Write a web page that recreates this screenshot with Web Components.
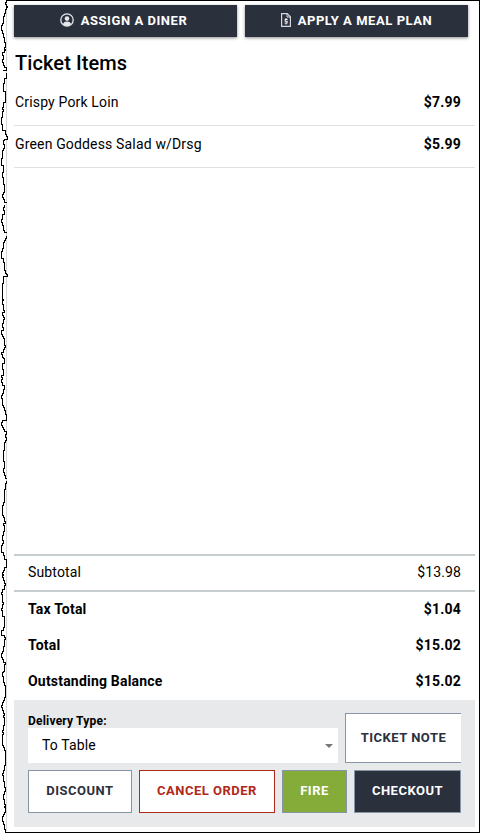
<!DOCTYPE html>
<html>
<head>
<meta charset="utf-8">
<style>
  html, body { margin: 0; padding: 0; background: #fff; }
  body { font-family: Roboto, "Liberation Sans", sans-serif; color: #000; }
</style>
</head>
<body>
<ticket-screen>
  <div slot="top" style="display:contents">
    <action-button icon="user">ASSIGN A DINER</action-button>
    <action-button icon="plan">APPLY A MEAL PLAN</action-button>
  </div>
  <ticket-item name="Crispy Pork Loin" price="$7.99"></ticket-item>
  <ticket-item name="Green Goddess Salad w/Drsg" price="$5.99"></ticket-item>
  <total-row slot="totals" label="Subtotal" value="$13.98"></total-row>
  <total-row slot="totals" label="Tax Total" value="$1.04" strong></total-row>
  <total-row slot="totals" label="Total" value="$15.02" strong></total-row>
  <total-row slot="totals" label="Outstanding Balance" value="$15.02" strong></total-row>
  <order-panel slot="panel"></order-panel>
</ticket-screen>

<script>
  const ICONS = {
    user: `<svg width="14" height="14" viewBox="0 0 14 14"><circle cx="7" cy="7" r="6.2" fill="none" stroke="#e6e7ea" stroke-width="1.3"/><circle cx="7" cy="5.6" r="2.3" fill="#e6e7ea"/><path d="M2.9 11c.7-1.9 2.2-2.6 4.1-2.6s3.4.7 4.1 2.6C10 12.4 8.6 13 7 13s-3-.6-4.1-2z" fill="#e6e7ea"/></svg>`,
    plan: `<svg width="10" height="14" viewBox="0 0 10 14"><path d="M.6.6h5.6l3.2 3.2v9.6H.6z" fill="none" stroke="#d6d7da" stroke-width="1.2"/><path d="M6 .8v3.2h3.2" fill="none" stroke="#d6d7da" stroke-width="1"/><path d="M6.6 6.4H4.2v1.8h1.9v1.8H3.6M5 5.2v1.2M5 10v1.4" fill="none" stroke="#f0f0f2" stroke-width="1.1"/></svg>`
  };

  // the torn left edge, traced from the screenshot: [x, y] pairs, one list per unbroken run
  const TORN_EDGE = [
    [[6,0],[6,7],[3,18],[1,28],[3,33],[5,42],[4,50],[2,53],[2,60],[4,65],[6,68],[2,70]],
    [[6,73],[3,83],[5,95],[3,103],[2,113],[1,122],[5,132],[7,137],[3,140],[3,148],[1,158],[3,170],[3,182],[4,190],[2,195],[6,202]],
    [[4,205],[4,210],[2,215],[2,223],[4,230],[6,233]],
    [[6,236],[3,243],[1,253],[3,260],[4,268],[6,273],[7,274]],
    [[7,275],[3,276],[2,287],[2,300],[4,310],[2,313],[4,317],[2,323],[3,328],[1,332],[4,338],[4,347],[1,352],[4,358],[2,367],[2,377],[1,380],[4,385],[2,393],[2,403],[5,410],[6,418],[2,420],[2,425],[6,432],[4,443],[3,453],[4,463],[3,470],[6,478]],
    [[6,481],[5,483],[4,495],[2,507],[4,517],[4,527],[2,535],[2,543],[1,548],[6,562],[3,570],[2,575],[5,583],[1,592],[3,602],[1,608],[4,617],[3,628],[1,630],[5,637],[3,647],[1,655],[5,662],[2,672],[3,680],[5,690],[4,698],[1,705],[4,713],[4,723],[2,730],[2,743],[5,750],[5,763],[2,773],[5,787],[3,797],[5,807],[2,817],[4,827],[5,832]]
  ];

  class TicketScreen extends HTMLElement {
    constructor() {
      super();
      this.attachShadow({ mode: "open" });
      this.shadowRoot.innerHTML = `
        <style>
          :host { display: flex; width: 480px; height: 833px; background: #fff; }
          .torn { flex: none; width: 6px; height: 831px; border-right: 1px solid #d4d6d8; }
          .torn svg { display: block; overflow: visible; }
          main { flex: 1; min-width: 0; display: flex; flex-direction: column; box-sizing: border-box; height: 833px;
                 padding: 4px 4px 5px 7px; border-top: 1px solid #000; border-right: 1px solid #000; border-bottom: 1px solid #000; }
          .top { display: grid; grid-template-columns: 223px 223px; gap: 8px; }
          h1 { margin: 0; padding: 13px 0 0 1px; font: 500 20px/26px Roboto, sans-serif; letter-spacing: .1px; height: 26px; }
          .items { flex: 1; padding-top: 8px; }
          .totals { border-top: 2px solid #c8cdd0; }
        </style>
        <div class="torn"><svg id="edge" width="8" height="833"></svg></div>
        <main>
          <div class="top"><slot name="top"></slot></div>
          <h1>Ticket Items</h1>
          <div class="items"><slot></slot></div>
          <div class="totals"><slot name="totals"></slot></div>
          <slot name="panel"></slot>
        </main>`;
      this.drawEdge();
    }

    // steps between the traced points with a pixel of seeded jitter, so it looks like the jagged original
    drawEdge() {
      let seed = 11;
      const rnd = () => (seed = (seed * 16807) % 2147483647) / 2147483647;
      let d = "";
      for (const run of TORN_EDGE) {
        d += `M${run[0][0] + .5} ${run[0][1]} `;
        for (let i = 1; i < run.length; i++) {
          const [x0, y0] = run[i - 1], [x1, y1] = run[i];
          for (let y = y0 + 2; y < y1; y += 2 + Math.floor(rnd() * 2)) {
            const x = Math.round(x0 + (x1 - x0) * (y - y0) / (y1 - y0) + (rnd() - .5) * 1.4);
            d += `V${y} H${Math.max(0, Math.min(7, x)) + .5} `;
          }
          d += `V${y1} H${x1 + .5} `;
        }
      }
      this.shadowRoot.getElementById("edge").innerHTML =
        `<path d="${d}" fill="none" stroke="#000" stroke-width="1" shape-rendering="crispEdges"/>
         <path d="M5 832.5H8" stroke="#000" stroke-width="1" shape-rendering="crispEdges"/>`;
    }
  }

  class ActionButton extends HTMLElement {
    constructor() {
      super();
      this.attachShadow({ mode: "open" });
      const icon = ICONS[this.getAttribute("icon")] || "";
      this.shadowRoot.innerHTML = `
        <style>
          :host { display: flex; align-items: center; justify-content: center; gap: 7px; box-sizing: border-box; height: 32px; padding-bottom: 2px;
                  background: #2b303d; color: #fff; font: 700 13px Roboto, sans-serif; letter-spacing: .55px;
                  box-shadow: 0 1px 3px rgba(0,0,0,.45); }
          :host([icon="user"]) { padding-right: 4px; }
          svg { display: block; }
        </style>
        ${icon}<slot></slot>`;
    }
  }

  class TicketItem extends HTMLElement {
    constructor() {
      super();
      this.attachShadow({ mode: "open" });
      this.shadowRoot.innerHTML = `
        <style>
          :host { display: flex; align-items: center; justify-content: space-between; box-sizing: border-box;
                  height: 42px; padding: 0 2px 6px 1px; border-bottom: 1px solid #e0e1e2;
                  font: 400 14px Roboto, sans-serif; letter-spacing: .16px; }
          b { font-weight: 700; padding-right: 12px; letter-spacing: .2px; }
        </style>
        <span>${this.getAttribute("name")}</span><b>${this.getAttribute("price")}</b>`;
    }
  }

  class TotalRow extends HTMLElement {
    constructor() {
      super();
      this.attachShadow({ mode: "open" });
      const strong = this.hasAttribute("strong");
      this.shadowRoot.innerHTML = `
        <style>
          :host { display: flex; align-items: center; justify-content: space-between; box-sizing: border-box;
                  height: 36px; padding: 0 14px 2px; font: ${strong ? 700 : 400} 14px Roboto, sans-serif;
                  letter-spacing: ${strong ? ".2px" : ".14px"}; }
          :host([label="Subtotal"]) { border-bottom: 2px solid #c8cdd0; }
        </style>
        <span>${this.getAttribute("label")}</span><span>${this.getAttribute("value")}</span>`;
    }
  }

  class PanelButton extends HTMLElement {
    constructor() {
      super();
      this.attachShadow({ mode: "open" });
      this.shadowRoot.innerHTML = `
        <style>
          :host { display: flex; align-items: center; justify-content: center; box-sizing: border-box; height: 43px; padding-bottom: 2px;
                  background: #fff; color: #2b303d; border: 1px solid #8795a6; font: 700 13px Roboto, sans-serif; letter-spacing: .5px; }
          :host([kind="danger"]) { color: #b0281a; border-color: #b0281a; }
          :host([kind="go"]) { background: #85ab38; color: #fff; }
          :host([kind="dark"]) { background: #2b303d; color: #fff; }
          :host([kind="open"]) { border-right: 0; height: 50px; }
        </style>
        <slot></slot>`;
    }
  }

  class DeliverySelect extends HTMLElement {
    constructor() {
      super();
      this.attachShadow({ mode: "open" });
      this.shadowRoot.innerHTML = `
        <style>
          :host { display: block; font: 700 12px Roboto, sans-serif; letter-spacing: .2px; }
          .label { height: 15px; line-height: 17px; }
          .box { display: flex; align-items: center; justify-content: space-between; box-sizing: border-box; height: 35px;
                 padding: 0 5px 2px 14px; background: #fff; font: 400 14px Roboto, sans-serif; letter-spacing: .14px; }
          i { width: 0; height: 0; margin-top: 2px; border: 4px solid transparent; border-top: 4px solid #777; border-bottom: 0; }
        </style>
        <div class="label">Delivery Type:</div>
        <div class="box"><span>To Table</span><i></i></div>`;
    }
  }

  class OrderPanel extends HTMLElement {
    constructor() {
      super();
      this.attachShadow({ mode: "open" });
      this.shadowRoot.innerHTML = `
        <style>
          :host { display: flex; flex-direction: column; gap: 7px; box-sizing: border-box; height: 127px; padding: 13px 14px 0; background: #e8e9eb; }
          .one { display: grid; grid-template-columns: 310px 116px; gap: 7px; align-items: end; }
          .two { display: grid; grid-template-columns: 104px 136px 65px 107px; gap: 7px; }
        </style>
        <div class="one">
          <delivery-select></delivery-select>
          <panel-button kind="open">TICKET NOTE</panel-button>
        </div>
        <div class="two">
          <panel-button>DISCOUNT</panel-button>
          <panel-button kind="danger">CANCEL ORDER</panel-button>
          <panel-button kind="go">FIRE</panel-button>
          <panel-button kind="dark">CHECKOUT</panel-button>
        </div>`;
    }
  }

  customElements.define("action-button", ActionButton);
  customElements.define("ticket-item", TicketItem);
  customElements.define("total-row", TotalRow);
  customElements.define("panel-button", PanelButton);
  customElements.define("delivery-select", DeliverySelect);
  customElements.define("order-panel", OrderPanel);
  customElements.define("ticket-screen", TicketScreen);
</script>
</body>
</html>
